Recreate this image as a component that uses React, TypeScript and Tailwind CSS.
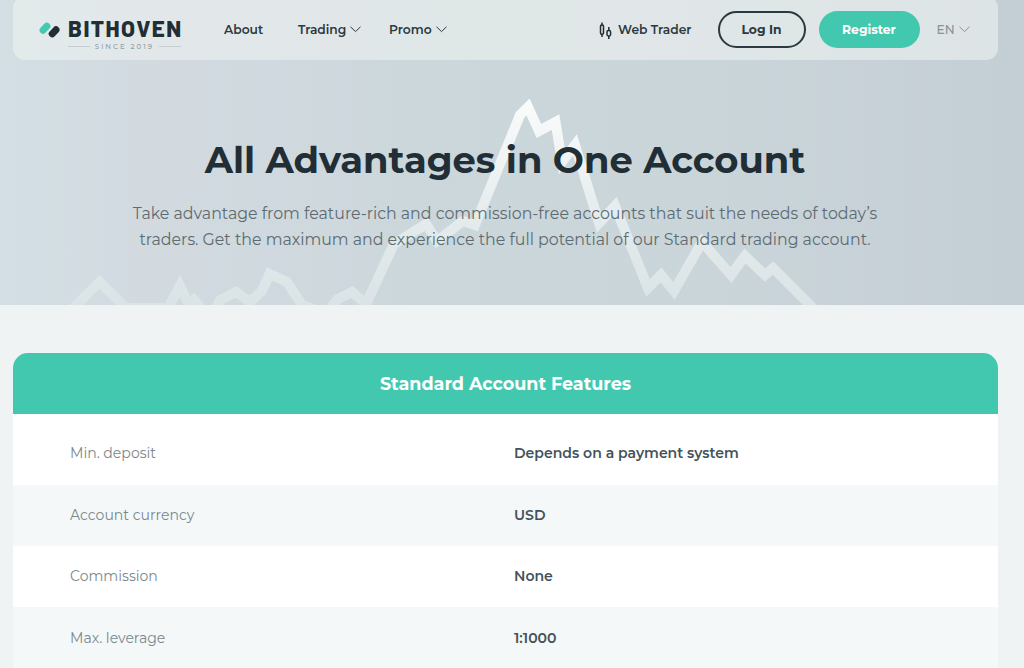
import React from "react";

interface Feature {
  name: string;
  value: string;
}

const features: Feature[] = [
  { name: "Min. deposit", value: "Depends on a payment system" },
  { name: "Account currency", value: "USD" },
  { name: "Commission", value: "None" },
  { name: "Max. leverage", value: "1:1000" },
];

const Chevron: React.FC = () => (
  <svg className="h-[7px] w-[11px] shrink-0" viewBox="0 0 11 7" fill="none" stroke="currentColor">
    <path d="M0.5 0.8 5.5 5.6 10.5 0.8" />
  </svg>
);

const Logo: React.FC = () => (
  <a className="flex w-[185px] shrink-0 gap-[7px] pt-[18px]">
    <svg className="mt-[4px] h-[16px] w-[21px] shrink-0" viewBox="0 0 21 16" strokeWidth="7" strokeLinecap="round">
      <path d="M4.1 8.2 7.9 4.2" stroke="#42c9b0" />
      <path d="M13.2 11.8 17 7.8" stroke="#212e35" />
    </svg>
    <div className="w-[114px] pl-px">
      <div className="h-[21px] font-['Barlow','Inter',sans-serif] text-[22.5px] leading-[21px] font-extrabold tracking-[1.5px] text-[#212e35]">
        BITHOVEN
      </div>
      <div className="mt-[4px] flex h-[7px] items-center justify-between">
        <span className="h-px w-[22px] bg-[#c5cdd0]" />
        <span className="text-[7px] leading-[7px] font-medium tracking-[2px] text-[#939fa3]">SINCE 2019</span>
        <span className="h-px w-[22px] bg-[#c5cdd0]" />
      </div>
    </div>
  </a>
);

const Header: React.FC = () => (
  <header className="relative ml-[13px] -mt-1 flex h-[64px] w-[985px] rounded-xl bg-[#ebf0ee]/65 pt-1 pl-[26px] text-[12.3px] font-semibold text-[#2b3940]">
    <Logo />
    <nav className="flex h-[59.5px] items-center">
      <a className="w-[74px]">About</a>
      <a className="flex w-[91px] items-center gap-1">Trading <Chevron /></a>
      <a className="flex w-[210px] items-center gap-1">Promo <Chevron /></a>
    </nav>
    <div className="flex h-[59.5px] items-center">
      <svg className="mt-[3px] mr-[6px] h-[18px] w-[13px]" viewBox="0 0 13 18" fill="none" stroke="#212e35" strokeWidth="1.5">
        <path d="M3 0.500v3M3 12v3M9.800 5v3.500M9.800 14V17" />
        <rect x="1.500" y="3" width="3" height="9.2" rx="1.2" />
        <rect x="8" y="8.500" width="3.600" height="5.500" rx="1.400" />
      </svg>
      <a className="w-[99.5px]">Web Trader</a>
      <button className="mr-[13px] -mt-px h-[37px] w-[88px] rounded-full border-2 border-[#2b3940] pt-px font-bold">Log In</button>
      <button className="mr-[17px] -mt-px h-[37px] w-[101px] rounded-full bg-[#42c8af] pt-px font-bold text-white">Register</button>
      <a className="flex items-center gap-1 font-medium text-[#87949a]">EN <Chevron /></a>
    </div>
  </header>
);

const HeroChart: React.FC = () => (
  <svg className="absolute inset-0 h-[305px] w-[1024px]" viewBox="0 0 1024 305" fill="none">
    <defs>
      <linearGradient id="line" x1="0" y1="98" x2="0" y2="305" gradientUnits="userSpaceOnUse">
        <stop stopColor="#fbfcfc" />
        <stop offset="0.6" stopColor="#e4ebec" />
        <stop offset="1" stopColor="#dae3e6" />
      </linearGradient>
    </defs>
    <path
      stroke="url(#line)"
      strokeWidth="10"
      strokeMiterlimit="10"
      d="M69 312 99.500 282 126 308H168L180 286 189 305 194 300 203 310H215L220 300 236 292 250 302 262 291 269.500 274 287 282 302 305 318 311H328L338 299 352 292 366 304 394 244 426 224 437 241 463 221 475 225 520 115 528 107 539 131 555.500 122 562 162 575 145 599 223 615 206 648 288 661 275 674 291 702 242 731 275 745 256 765 275 773 268 816 311"
    />
  </svg>
);

const App: React.FC = () => {
  return (
    <div className="h-[668px] w-[1024px] overflow-hidden bg-[#eff3f4] font-['Montserrat','Inter',sans-serif]">
      <section className="relative h-[305px] overflow-hidden bg-[linear-gradient(90deg,#d3dfe4_0%,#d2dae0_15%,#ccd7dc_40%,#cad5da_70%,#c4ced5_100%)]">
        <HeroChart />
        <Header />
        <div className="relative w-[1010px] pt-[74px] text-center">
          <h1 className="text-[36.87px] leading-[52px] font-bold text-[#212e35]">
            All Advantages in One Account
          </h1>
          <p className="mt-[15px] text-[15.8px] leading-[26px] text-[#5d6b70]">
            Take advantage from feature-rich and commission-free accounts that suit the needs of today’s
            <br />
            traders. Get the maximum and experience the full potential of our Standard trading account.
          </p>
        </div>
      </section>

      <section className="mt-[48px] ml-[13px] w-[985px]">
        <h2 className="h-[61px] rounded-t-[15px] bg-[#42c8af] text-center text-[17.56px] leading-[62px] font-bold text-white">
          Standard Account Features
        </h2>
        <div className="bg-white pt-[9.3px]">
          {features.map((f) => (
            <div key={f.name} className="flex h-[61.4px] items-center pl-[57px] text-[14.05px] even:bg-[#f4f8f9]">
              <span className="w-[444px] text-[#7b888d]">{f.name}</span>
              <span className="font-semibold text-[#43525a]">{f.value}</span>
            </div>
          ))}
        </div>
      </section>
    </div>
  );
};

export default App;
